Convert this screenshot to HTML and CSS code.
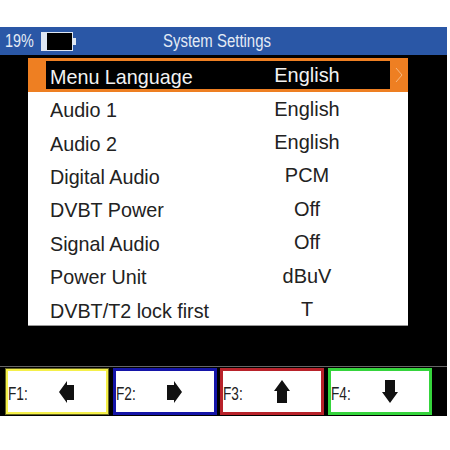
FILE: index.html
```html
<!DOCTYPE html>
<html lang="en">
<head>
  <meta charset="UTF-8">
  <title>System Settings</title>
  <link rel="stylesheet" href="styles.css">
</head>
<body>

  <div class="screen">
    <div class="header">
      <span class="percent">19%</span>
      <span class="battery"><span class="battery-level"></span></span>
      <span class="title">System Settings</span>
    </div>

    <div class="content">
      <div class="panel">
        <div class="row selected">
          <div class="row-inner">
            <span class="name">Menu Language</span>
            <span class="value">English</span>
          </div>
          <svg class="chevron" width="8" height="16" viewBox="0 0 8 16">
            <path d="M1 1 L7 8 L1 15" fill="none" stroke="#f7b87e" stroke-width="1"/>
          </svg>
        </div>
        <div class="row"><span class="name">Audio 1</span><span class="value">English</span></div>
        <div class="row"><span class="name">Audio 2</span><span class="value">English</span></div>
        <div class="row"><span class="name">Digital Audio</span><span class="value">PCM</span></div>
        <div class="row"><span class="name">DVBT Power</span><span class="value">Off</span></div>
        <div class="row"><span class="name">Signal Audio</span><span class="value">Off</span></div>
        <div class="row"><span class="name">Power Unit</span><span class="value">dBuV</span></div>
        <div class="row"><span class="name">DVBT/T2 lock first</span><span class="value">T</span></div>
      </div>
    </div>

    <div class="footer">
      <div class="key key-yellow">
        <span class="key-label">F1:</span>
        <svg class="arrow" width="16" height="24" viewBox="0 0 16 24"><path d="M0 12 L8 1 L8 5 L15 5 L15 20 L8 20 L8 23 Z" fill="#111"/></svg>
      </div>
      <div class="key key-blue">
        <span class="key-label">F2:</span>
        <svg class="arrow" width="16" height="24" viewBox="0 0 16 24"><path d="M15 12 L7 1 L7 5 L0 5 L0 20 L7 20 L7 23 Z" fill="#111"/></svg>
      </div>
      <div class="key key-red">
        <span class="key-label">F3:</span>
        <svg class="arrow" width="16" height="24" viewBox="0 0 16 24"><path d="M8 0 L16 11 L13 11 L13 23 L3 23 L3 11 L0 11 Z" fill="#111"/></svg>
      </div>
      <div class="key key-green">
        <span class="key-label">F4:</span>
        <svg class="arrow" width="16" height="24" viewBox="0 0 16 24"><path d="M8 23 L16 12 L13 12 L13 0 L3 0 L3 12 L0 12 Z" fill="#111"/></svg>
      </div>
    </div>
  </div>

</body>
</html>
```

FILE: styles.css
```css
* {
  box-sizing: border-box;
}

body {
  margin: 0;
  padding-top: 27px;
  background-color: #fff;
  font-family: "Liberation Sans", Arial, sans-serif;
}

.screen {
  width: 447px;
  height: 389px;
  background-color: #000;
  display: flex;
  flex-direction: column;
}

.header {
  height: 28px;
  background-color: #2a57a6;
  color: #e4ebf5;
  display: flex;
  align-items: center;
  padding-left: 5px;
  font-size: 18px;
  position: relative;
}

.percent {
  transform: scaleX(0.8);
  transform-origin: left center;
  width: 36px;
}

.battery {
  width: 32px;
  height: 19px;
  border: 1px solid #dfe7f3;
  border-left-width: 6px;
  background-color: #000;
  display: block;
  position: relative;
}

.battery::after {
  content: "";
  position: absolute;
  right: -4px;
  top: 5px;
  width: 3px;
  height: 7px;
  background-color: #dfe7f3;
}

.title {
  position: absolute;
  left: 163px;
  top: 4px;
  transform: scaleX(0.83);
  transform-origin: left center;
  white-space: nowrap;
}

.content {
  height: 312px;
  padding: 3px 0 0 28px;
  border-bottom: 1px solid #666;
}

.panel {
  width: 380px;
  height: 268px;
  background-color: #fff;
  border-bottom: 1px solid #999;
}

.row {
  height: 33.4px;
  display: flex;
  align-items: center;
  padding-left: 22px;
  font-size: 21px;
  color: #222;
}

.row .name {
  width: 211px;
  padding-top: 3px;
  white-space: nowrap;
  transform: scaleX(0.94);
  transform-origin: left center;
}

.row .value {
  width: 92px;
  text-align: center;
  transform: scaleX(0.95);
}

.row.selected {
  height: 34px;
  background-color: #ee7f22;
  padding-left: 18px;
  padding-right: 2px;
  justify-content: space-between;
}

.row-inner {
  width: 344px;
  height: 28px;
  background-color: #000;
  color: #f2f2f2;
  display: flex;
  align-items: center;
  padding-left: 4px;
}

.chevron {
  margin-right: 3px;
}

.footer {
  display: flex;
  gap: 3.5px;
  padding: 1px 0 0 5px;
}

.key {
  width: 104px;
  height: 47px;
  background-color: #fff;
  border: 3px solid #000;
  display: flex;
  align-items: center;
  position: relative;
  font-size: 19px;
  color: #222;
}

.key-label {
  margin-top: 5px;
  transform: scaleX(0.72);
  transform-origin: left center;
}

.arrow {
  position: absolute;
  left: 51px;
  top: 9px;
}

.key-yellow {
  border-color: #f5f04a;
  outline: 1px solid #666622;
  outline-offset: -1px;
}

.key-blue {
  border-color: #1414a8;
}

.key-red {
  border-color: #b8222a;
}

.key-green {
  border-color: #35d43c;
}
```
